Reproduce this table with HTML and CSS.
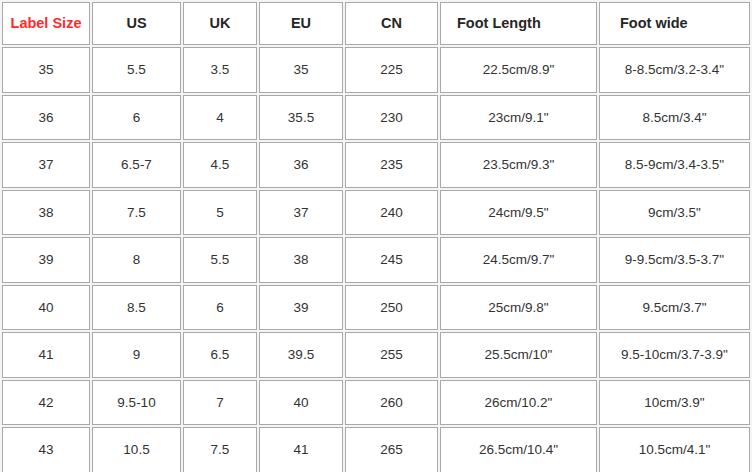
FILE: index.html
```html
<!DOCTYPE html>
<html>
<head>
<meta charset="utf-8">
<link rel="stylesheet" href="styles.css">
</head>
<body>
<table class="size-table">
  <colgroup>
    <col class="c1"><col class="c2"><col class="c3"><col class="c4"><col class="c5"><col class="c6"><col class="c7">
  </colgroup>
  <thead>
    <tr class="head">
      <th class="label">Label Size</th>
      <th>US</th>
      <th>UK</th>
      <th>EU</th>
      <th>CN</th>
      <th class="left fl">Foot Length</th>
      <th class="left fw">Foot wide</th>
    </tr>
  </thead>
  <tbody>
    <tr><td>35</td><td>5.5</td><td>3.5</td><td>35</td><td>225</td><td>22.5cm/8.9"</td><td>8-8.5cm/3.2-3.4"</td></tr>
    <tr><td>36</td><td>6</td><td>4</td><td>35.5</td><td>230</td><td>23cm/9.1"</td><td>8.5cm/3.4"</td></tr>
    <tr><td>37</td><td>6.5-7</td><td>4.5</td><td>36</td><td>235</td><td>23.5cm/9.3"</td><td>8.5-9cm/3.4-3.5"</td></tr>
    <tr><td>38</td><td>7.5</td><td>5</td><td>37</td><td>240</td><td>24cm/9.5"</td><td>9cm/3.5"</td></tr>
    <tr><td>39</td><td>8</td><td>5.5</td><td>38</td><td>245</td><td>24.5cm/9.7"</td><td>9-9.5cm/3.5-3.7"</td></tr>
    <tr><td>40</td><td>8.5</td><td>6</td><td>39</td><td>250</td><td>25cm/9.8"</td><td>9.5cm/3.7"</td></tr>
    <tr><td>41</td><td>9</td><td>6.5</td><td>39.5</td><td>255</td><td>25.5cm/10"</td><td>9.5-10cm/3.7-3.9"</td></tr>
    <tr><td>42</td><td>9.5-10</td><td>7</td><td>40</td><td>260</td><td>26cm/10.2"</td><td>10cm/3.9"</td></tr>
    <tr><td>43</td><td>10.5</td><td>7.5</td><td>41</td><td>265</td><td>26.5cm/10.4"</td><td>10.5cm/4.1"</td></tr>
  </tbody>
</table>
</body>
</html>
```
FILE: styles.css
```css
html, body {
  margin: 0;
  padding: 0;
  background: #ffffff;
}

.size-table {
  width: 752px;
  table-layout: fixed;
  border-collapse: separate;
  border-spacing: 2px;
  background: #f4f4f4;
  font-family: "Liberation Sans", Arial, sans-serif;
}

.c1 { width: 88px; }
.c2 { width: 89px; }
.c3 { width: 74px; }
.c4 { width: 84px; }
.c5 { width: 93px; }
.c6 { width: 157px; }
.c7 { width: 151px; }

.size-table th,
.size-table td {
  background: #ffffff;
  border: 1px solid #a9a9a9;
  padding: 0;
  text-align: center;
  vertical-align: middle;
  white-space: nowrap;
  overflow: hidden;
}

.size-table th {
  font-size: 14.5px;
  font-weight: bold;
  color: #262626;
  padding-bottom: 2px;
}

.size-table td {
  font-size: 13.5px;
  color: #333333;
}

.head {
  height: 43px;
}

.size-table tbody tr {
  height: 45.5px;
}

.size-table th.label {
  color: #ff2a2a;
}

.size-table th.left {
  text-align: left;
}

.size-table th.fl {
  padding-left: 16px;
}

.size-table th.fw {
  padding-left: 20px;
}
```
